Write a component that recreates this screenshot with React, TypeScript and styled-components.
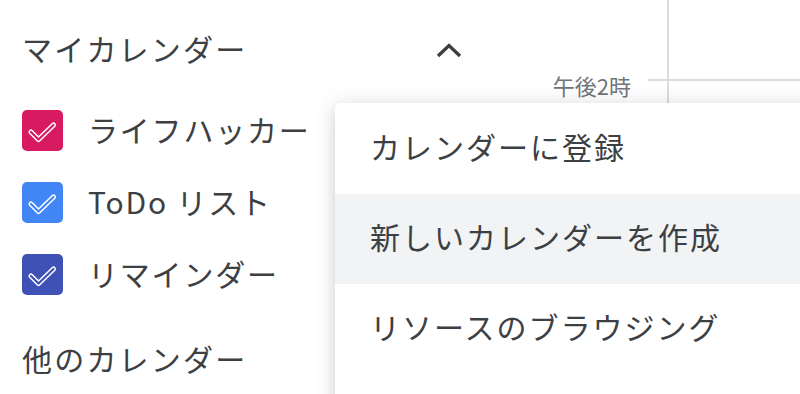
import React from "react";
import styled, { createGlobalStyle } from "styled-components";

const Global = createGlobalStyle`
  html, body { margin: 0; padding: 0; background: #fff; }
  * { box-sizing: border-box; }
`;

const FONT = `"Noto Sans CJK JP", "Noto Sans", Roboto, sans-serif`;

const Page = styled.div`
  position: relative;
  width: 800px;
  height: 394px;
  overflow: hidden;
  display: flex;
  background: #fff;
  font-family: ${FONT};
  color: #3c4043;
`;

const Sidebar = styled.div`
  width: 512px;
  flex: none;
  display: flex;
  flex-direction: column;
  padding: 12px 39px 0 22px;
`;

const SectionHeader = styled.div<{ $mt?: number }>`
  height: 72px;
  margin-top: ${(p) => p.$mt ?? 0}px;
  display: flex;
  align-items: center;
  justify-content: space-between;
  font-size: 30px;
  letter-spacing: 2.2px;
  white-space: nowrap;
`;

const ChevronBox = styled.div`
  width: 48px;
  height: 48px;
  display: flex;
  align-items: center;
  justify-content: center;
  margin-top: 4px;
`;

const List = styled.div`
  margin-top: 11px;
  display: flex;
  flex-direction: column;
`;

const Row = styled.div`
  height: 72px;
  display: flex;
  align-items: center;
  gap: 25px;
`;

const Box = styled.div<{ $color: string }>`
  width: 41px;
  height: 41px;
  border-radius: 5px;
  background: ${(p) => p.$color};
  display: flex;
  align-items: center;
  justify-content: center;
  flex: none;
`;

const Label = styled.span`
  font-size: 30px;
  letter-spacing: 1.8px;
  white-space: nowrap;
  margin-bottom: 3px;
`;

const Gutter = styled.div`
  width: 155px;
  flex: none;
  display: flex;
  flex-direction: column;
`;

const GutterRow = styled.div`
  margin-top: 70px;
  height: 20px;
  display: flex;
  align-items: flex-start;
  justify-content: flex-end;
`;

const TimeLabel = styled.span`
  font-size: 22px;
  line-height: 22px;
  color: #70757a;
  margin-top: 4px;
  margin-right: 17px;
  white-space: nowrap;
`;

const Tick = styled.div`
  width: 19px;
  height: 2px;
  background: #dadce0;
  align-self: center;
`;

const Grid = styled.div`
  flex: 1;
  border-left: 2px solid #dadce0;
  display: flex;
  flex-direction: column;
`;

const HourLine = styled.div`
  margin-top: 79px;
  height: 2px;
  background: #dadce0;
`;

const Menu = styled.div`
  position: absolute;
  left: 335px;
  top: 103px;
  width: 520px;
  height: 340px;
  background: #fff;
  border-radius: 6px;
  box-shadow: 0 2px 22px rgba(0, 0, 0, 0.14), 0 6px 12px rgba(0, 0, 0, 0.08);
  padding-top: 1px;
  display: flex;
  flex-direction: column;
`;

const MenuItem = styled.div<{ $hover?: boolean }>`
  height: 90px;
  display: flex;
  align-items: center;
  padding: 0 0 6px 35px;
  font-size: 30px;
  letter-spacing: 2px;
  color: #3c4043;
  background: ${(p) => (p.$hover ? "#f1f3f4" : "transparent")};
  white-space: nowrap;
`;

const Check = ({ color }: { color: string }) => (
  <svg width="41" height="41" viewBox="0 0 41 41">
    <polyline points="9,22 16.5,29.5 31.5,15" fill="none" stroke="#fff" strokeWidth="5.2" strokeLinecap="round" strokeLinejoin="round" />
    <polyline points="9,22 16.5,29.5 31.5,15" fill="none" stroke={color} strokeWidth="2.2" strokeLinecap="round" strokeLinejoin="round" />
  </svg>
);

const ChevronUp = () => (
  <svg width="26" height="16" viewBox="0 0 26 16">
    <polyline points="2,14 13,3.5 24,14" fill="none" stroke="#3c4043" strokeWidth="3.4" />
  </svg>
);

const calendars = [
  { name: "ライフハッカー", color: "#d81b60" },
  { name: "ToDo リスト", color: "#4285f4" },
  { name: "リマインダー", color: "#3f51b5" },
];

const menuItems = ["カレンダーに登録", "新しいカレンダーを作成", "リソースのブラウジング"];

export default function App() {
  return (
    <>
      <Global />
      <Page>
        <Sidebar>
          <SectionHeader>
            <span>マイカレンダー</span>
            <ChevronBox>
              <ChevronUp />
            </ChevronBox>
          </SectionHeader>
          <List>
            {calendars.map((c) => (
              <Row key={c.name}>
                <Box $color={c.color}>
                  <Check color={c.color} />
                </Box>
                <Label>{c.name}</Label>
              </Row>
            ))}
          </List>
          <SectionHeader $mt={12}>
            <span>他のカレンダー</span>
          </SectionHeader>
        </Sidebar>
        <Gutter>
          <GutterRow>
            <TimeLabel>午後2時</TimeLabel>
            <Tick />
          </GutterRow>
        </Gutter>
        <Grid>
          <HourLine />
        </Grid>
        <Menu>
          {menuItems.map((m, i) => (
            <MenuItem key={m} $hover={i === 1}>
              {m}
            </MenuItem>
          ))}
        </Menu>
      </Page>
    </>
  );
}
